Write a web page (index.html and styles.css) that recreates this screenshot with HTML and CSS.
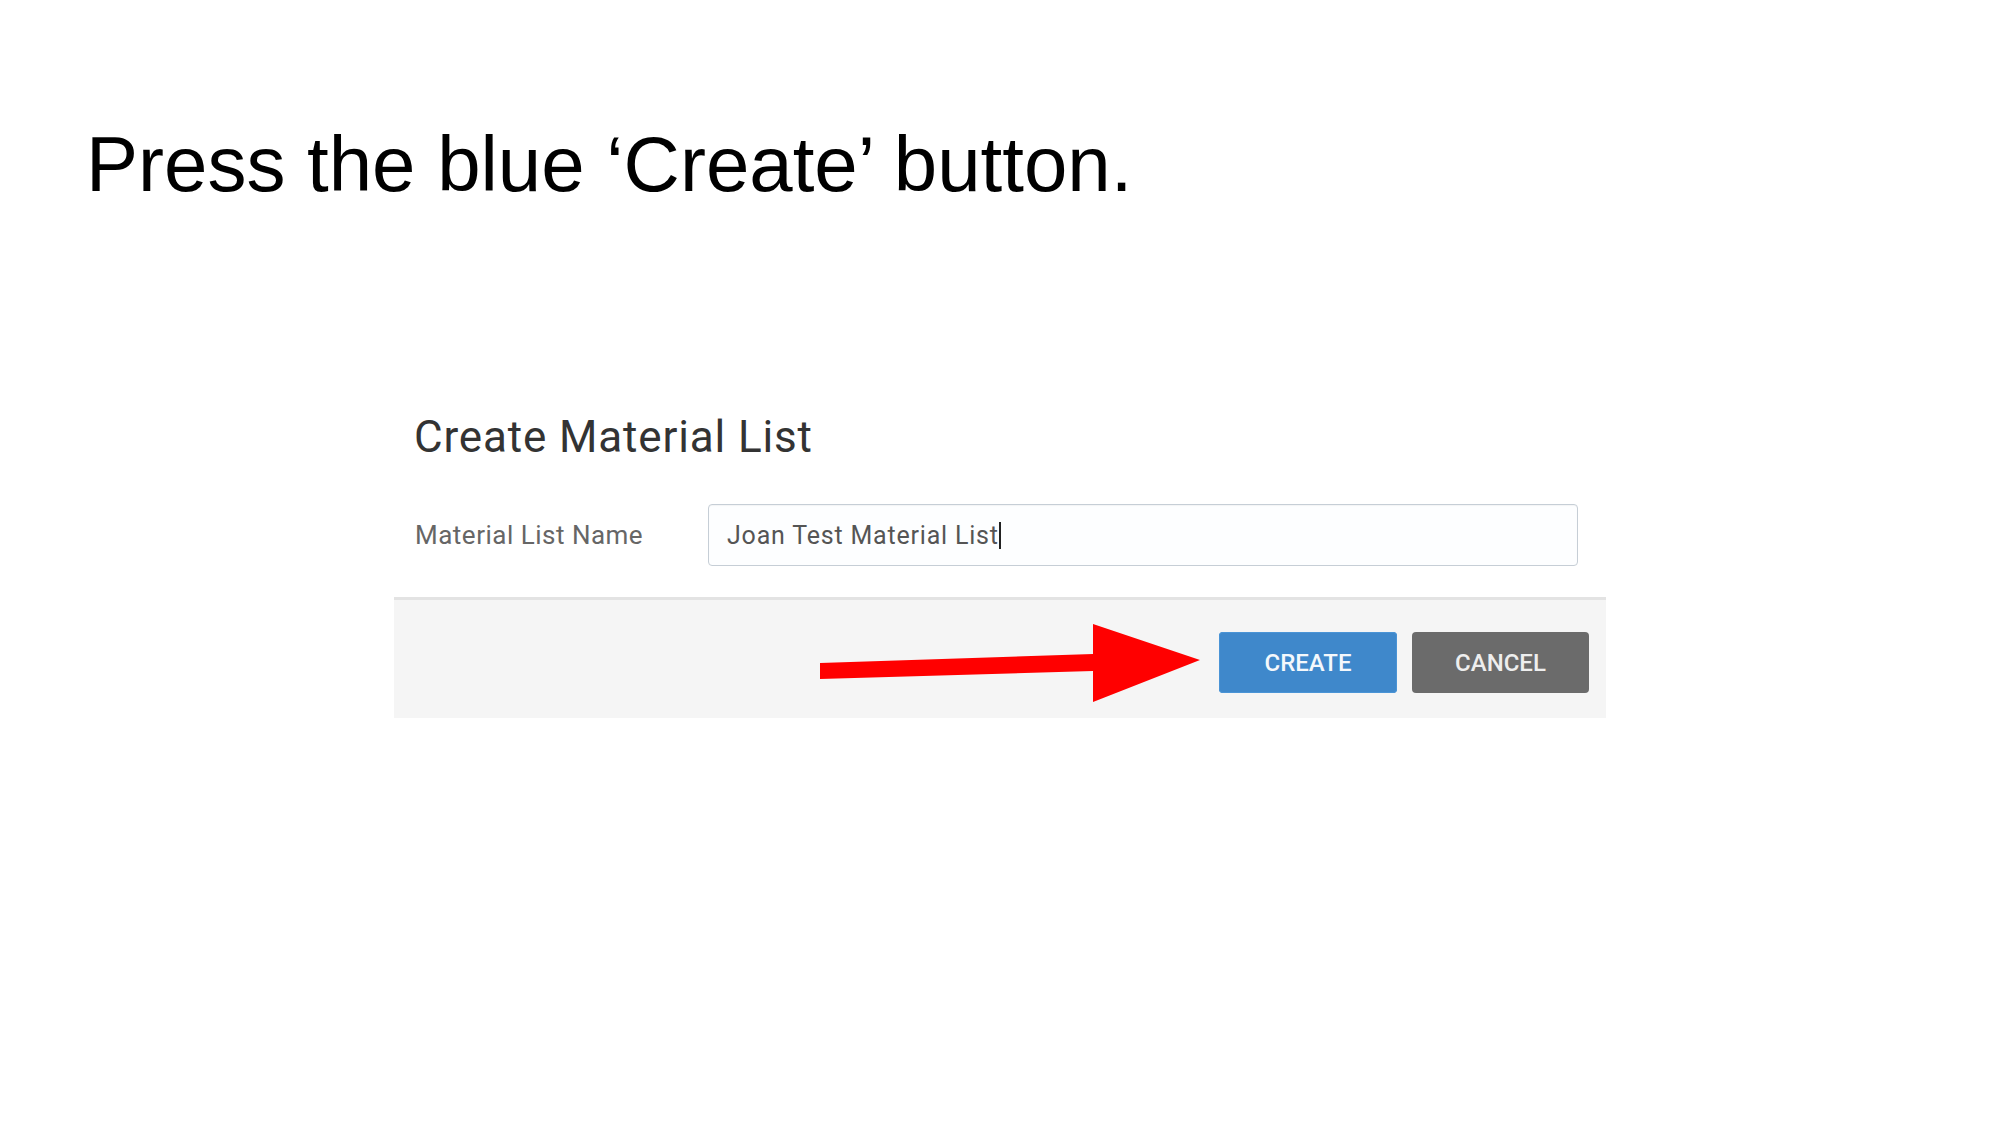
FILE: index.html
```html
<!DOCTYPE html>
<html>
<head>
<meta charset="utf-8">
<link rel="stylesheet" href="styles.css">
</head>
<body>
<div class="slide">
  <h1 class="slide-title">Press the blue ‘Create’ button.</h1>
  <div class="dialog">
    <div class="dialog-body">
      <h2 class="dialog-heading">Create Material List</h2>
      <div class="field-row">
        <label class="field-label">Material List Name</label>
        <div class="field-input"><span class="field-value">Joan Test Material List</span><span class="caret"></span></div>
      </div>
    </div>
    <div class="dialog-footer">
      <svg class="arrow" width="420" height="118" viewBox="0 0 420 118">
        <polygon points="32,63 305,54 305,24 412,60 305,102 305,71 32,79" fill="#ff0000"/>
      </svg>
      <button class="btn btn-create">CREATE</button>
      <button class="btn btn-cancel">CANCEL</button>
    </div>
  </div>
</div>
</body>
</html>
```
FILE: styles.css
```css
html, body {
  margin: 0;
  padding: 0;
  background: #ffffff;
}

.slide {
  width: 2000px;
  height: 1125px;
  overflow: hidden;
}

.slide-title {
  margin: 0;
  padding: 125px 0 0 86px;
  font-family: "Liberation Sans", Arial, sans-serif;
  font-weight: 400;
  font-size: 78px;
  line-height: 78px;
  color: #000000;
}

.dialog {
  margin: 212px 0 0 394px;
  width: 1212px;
  font-family: Roboto, "Noto Sans", sans-serif;
}

.dialog-body {
  padding: 0 28px 0 20px;
}

.dialog-heading {
  margin: 0;
  font-size: 44px;
  line-height: 44px;
  font-weight: 400;
  letter-spacing: 0.85px;
  color: #333333;
}

.field-row {
  display: flex;
  align-items: center;
  margin-top: 45px;
  margin-bottom: 31px;
}

.field-label {
  width: 293px;
  padding-left: 1px;
  font-size: 26px;
  line-height: 26px;
  letter-spacing: 0.5px;
  color: #666666;
}

.field-input {
  flex: 1;
  height: 60px;
  display: flex;
  align-items: center;
  padding-left: 18px;
  border: 1px solid #c6ced6;
  border-radius: 4px;
  background: #fdfeff;
  box-shadow: inset 0 1px 1px rgba(0, 0, 0, 0.04);
}

.field-value {
  font-size: 25px;
  line-height: 25px;
  letter-spacing: 0.8px;
  color: #555555;
}

.caret {
  display: inline-block;
  width: 2px;
  height: 27px;
  background: #222222;
  margin-left: 0;
}

.dialog-footer {
  position: relative;
  border-top: 3px solid #e3e3e3;
  background: #f5f5f5;
  height: 121px;
  box-sizing: border-box;
  display: flex;
  justify-content: flex-end;
  align-items: flex-start;
  gap: 15px;
  padding: 32px 17px 0 0;
}

.arrow {
  position: absolute;
  left: 394px;
  top: 0;
  width: 420px;
  height: 118px;
}

.btn {
  width: 177px;
  height: 61px;
  border: none;
  border-radius: 4px;
  font-family: Roboto, "Noto Sans", sans-serif;
  font-weight: 500;
  font-size: 24px;
  letter-spacing: 0;
  color: #f4f8fc;
  padding: 0;
}

.btn-create {
  width: 178px;
  background: #3f88cb;
  box-shadow: inset 0 0 0 1px #4a94d6;
}

.btn-cancel {
  background: #6b6b6b;
  color: #eeeeee;
}
```
